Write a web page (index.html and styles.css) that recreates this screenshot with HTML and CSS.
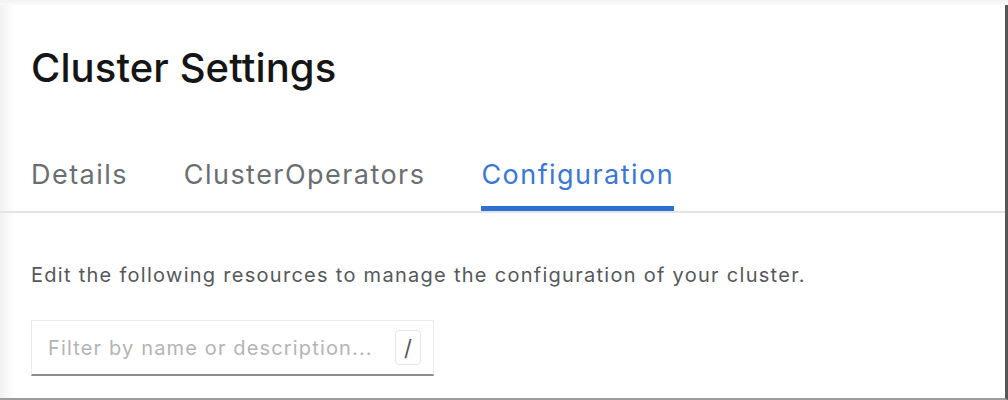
FILE: index.html
```html
<!DOCTYPE html>
<html lang="en">
<head>
<meta charset="utf-8">
<title>Cluster Settings</title>
<link rel="stylesheet" href="styles.css">
</head>
<body>
<div class="frame">
  <main class="page">
    <header class="page-header">
      <h1 class="title">Cluster Settings</h1>
    </header>
    <nav class="tabs">
      <a class="tab">Details</a>
      <a class="tab">ClusterOperators</a>
      <a class="tab tab-active">Configuration</a>
    </nav>
    <section class="content">
      <p class="help">Edit the following resources to manage the configuration of your cluster.</p>
      <div class="filter">
        <span class="placeholder">Filter by name or description...</span>
        <kbd class="kbd">/</kbd>
      </div>
    </section>
  </main>
</div>
</body>
</html>
```

FILE: styles.css
```css
* { box-sizing: border-box; }
html, body { margin: 0; padding: 0; }
body {
  width: 1008px;
  height: 400px;
  overflow: hidden;
  font-family: Inter, "Noto Sans", sans-serif;
  background: #fff;
}
.frame {
  height: 400px;
  padding-top: 5px;
  background: linear-gradient(to bottom, #f2f2f2, #fafafa 5px);
  display: flex;
}
.page {
  flex: 1;
  display: flex;
  flex-direction: column;
  border-right: 3px solid #575757;
  border-bottom: 2px solid #9c9c9c;
  background:
    linear-gradient(to right, #f1f1f1, #fbfbfb 10px, #ffffff 16px);
}
.page-header {
  padding: 39px 0 0 31px;
}
.title {
  margin: 0;
  font-size: 40px;
  line-height: 48px;
  font-weight: 500;
  color: #151515;
  letter-spacing: 0.1px;
}
.tabs {
  margin-top: 67px;
  display: flex;
  gap: 56px;
  padding-left: 31px;
  border-bottom: 2px solid #e4e4e4;
}
.tab {
  font-size: 27px;
  line-height: 32px;
  color: #6a6e73;
  letter-spacing: 1.45px;
  padding-bottom: 15px;
  border-bottom: 5px solid transparent;
}
.tab-active {
  color: #3a78d1;
  border-bottom-color: #2f6fcf;
}
.content {
  padding: 48px 0 0 31px;
}
.help {
  margin: 0;
  font-size: 20px;
  line-height: 28px;
  color: #55585b;
  letter-spacing: 1.28px;
}
.filter {
  margin-top: 31px;
  width: 403px;
  height: 56px;
  display: flex;
  align-items: center;
  justify-content: space-between;
  padding: 0 12px 0 16px;
  border: 1px solid #ececec;
  border-bottom: 2px solid #8a8d90;
}
.placeholder {
  font-size: 20px;
  color: #b4b4b4;
  letter-spacing: 1.15px;
}
.kbd {
  width: 26px;
  height: 35px;
  display: flex;
  align-items: center;
  justify-content: center;
  border: 1px solid #e6e6e6;
  border-radius: 4px;
  font-family: Inter, "Noto Sans", sans-serif;
  font-size: 22px;
  color: #555;
}
```
